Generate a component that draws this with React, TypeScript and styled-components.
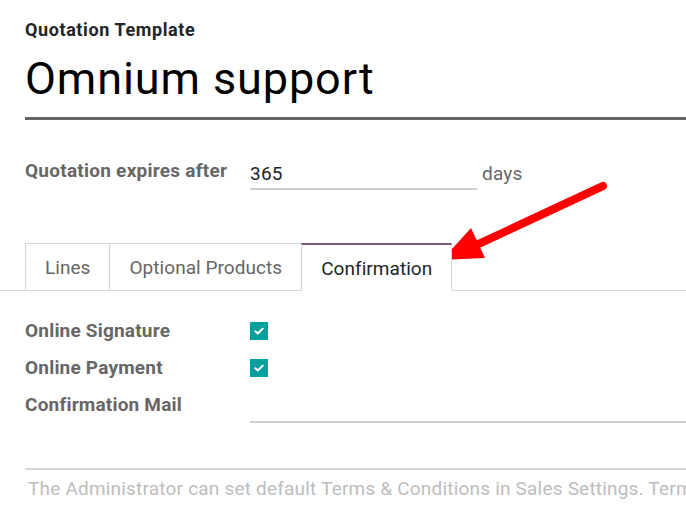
import React from "react";
import styled, { createGlobalStyle } from "styled-components";

const Global = createGlobalStyle`
  html, body { margin: 0; padding: 0; background: #fff; }
  body { font-family: Roboto, "Noto Sans", "Liberation Sans", sans-serif; overflow: hidden; }
  * { box-sizing: border-box; }
`;

const Page = styled.div`
  position: relative;
  width: 686px;
  height: 519px;
  overflow: hidden;
`;

const Sheet = styled.div`
  padding-left: 25px;
  width: 900px;
`;

const SmallLabel = styled.div`
  margin-top: 20px;
  font-size: 18px;
  letter-spacing: 0.6px;
  line-height: 20px;
  font-weight: 700;
  color: #212529;
`;

const Title = styled.h1`
  margin: 13px 0 0;
  font-size: 45px;
  letter-spacing: 0.9px;
  line-height: 52px;
  font-weight: 400;
  color: #000;
  padding-bottom: 12px;
  border-bottom: 3px solid #666;
`;

const ExpireRow = styled.div`
  display: flex;
  align-items: flex-start;
  margin-top: 36px;
  height: 34px;
`;

const FieldLabel = styled.div`
  width: 225px;
  flex: none;
  font-size: 19px;
  letter-spacing: 0.25px;
  font-weight: 700;
  color: #666;
  line-height: 30px;
`;

const InputLine = styled.div<{ $w?: number }>`
  width: ${(p) => (p.$w ? `${p.$w}px` : "auto")};
  flex: ${(p) => (p.$w ? "none" : "1")};
  height: 34px;
  border-bottom: 2px solid #cfcfcf;
  font-size: 19px;
  letter-spacing: 0.2px;
  line-height: 36px;
  color: #212529;
`;

const Unit = styled.div`
  margin-left: 5px;
  font-size: 19px;
  letter-spacing: 0.2px;
  line-height: 36px;
  color: #666;
`;

const TabBar = styled.div`
  display: flex;
  margin-top: 53px;
  margin-left: -25px;
  padding-left: 25px;
  border-bottom: 1px solid #d3d6dc;
  height: 48px;
`;

const Tab = styled.div<{ $active?: boolean }>`
  height: 48px;
  margin-right: -1px;
  padding: 0 19px;
  border: 1px solid #d3d6dc;
  border-top: ${(p) => (p.$active ? "2px solid #7c5977" : "1px solid #d3d6dc")};
  border-bottom: ${(p) => (p.$active ? "1px solid #fff" : "1px solid #d3d6dc")};
  background: #fff;
  font-size: 19px;
  letter-spacing: 0.05px;
  line-height: 47px;
  color: ${(p) => (p.$active ? "#212529" : "#666")};
  position: relative;
  z-index: ${(p) => (p.$active ? 1 : 0)};
`;

const FormGrid = styled.div`
  display: grid;
  grid-template-columns: 225px 1fr;
  grid-auto-rows: 37px;
  align-items: center;
  margin-top: 21px;
`;

const RowLabel = styled.div`
  font-size: 19px;
  letter-spacing: 0.2px;
  font-weight: 700;
  color: #666;
  line-height: 24px;
`;

const Check = styled.div`
  width: 18px;
  height: 18px;
  background: #00a09d;
  display: flex;
  align-items: center;
  justify-content: center;
`;

const MailInput = styled.div`
  align-self: end;
  height: 35px;
  border-bottom: 2px solid #cfcfcf;
`;

const Note = styled.div`
  margin-top: 45px;
  border-top: 2px solid #d3d6dc;
  padding: 7px 0 0 3px;
  font-size: 19px;
  letter-spacing: 0.2px;
  line-height: 24px;
  color: #bdbdbd;
  white-space: nowrap;
`;

const ArrowSvg = styled.svg`
  position: absolute;
  left: 0;
  top: 0;
  pointer-events: none;
`;

const CheckMark = () => (
  <svg width="10" height="8" viewBox="0 0 10 8">
    <path d="M1.3 4.2 L3.8 6.5 L8.7 1.6" fill="none" stroke="#fff" strokeWidth="2" strokeLinecap="round" strokeLinejoin="round" />
  </svg>
);

export default function App() {
  return (
    <Page>
      <Global />
      <Sheet>
        <SmallLabel>Quotation Template</SmallLabel>
        <Title>Omnium support</Title>
        <ExpireRow>
          <FieldLabel>Quotation expires after</FieldLabel>
          <InputLine $w={227}>365</InputLine>
          <Unit>days</Unit>
        </ExpireRow>
        <TabBar>
          <Tab>Lines</Tab>
          <Tab>Optional Products</Tab>
          <Tab $active>Confirmation</Tab>
        </TabBar>
        <FormGrid>
          <RowLabel>Online Signature</RowLabel>
          <Check><CheckMark /></Check>
          <RowLabel>Online Payment</RowLabel>
          <Check><CheckMark /></Check>
          <RowLabel>Confirmation Mail</RowLabel>
          <MailInput />
        </FormGrid>
        <Note>The Administrator can set default Terms &amp; Conditions in Sales Settings. Terms set here will show up instead</Note>
      </Sheet>
      <ArrowSvg width="686" height="519" viewBox="0 0 686 519">
        <line x1="603" y1="186" x2="470" y2="248" stroke="#ff0000" strokeWidth="8" strokeLinecap="round" />
        <polygon points="442,260 471,228 485,258" fill="#ff0000" />
      </ArrowSvg>
    </Page>
  );
}
